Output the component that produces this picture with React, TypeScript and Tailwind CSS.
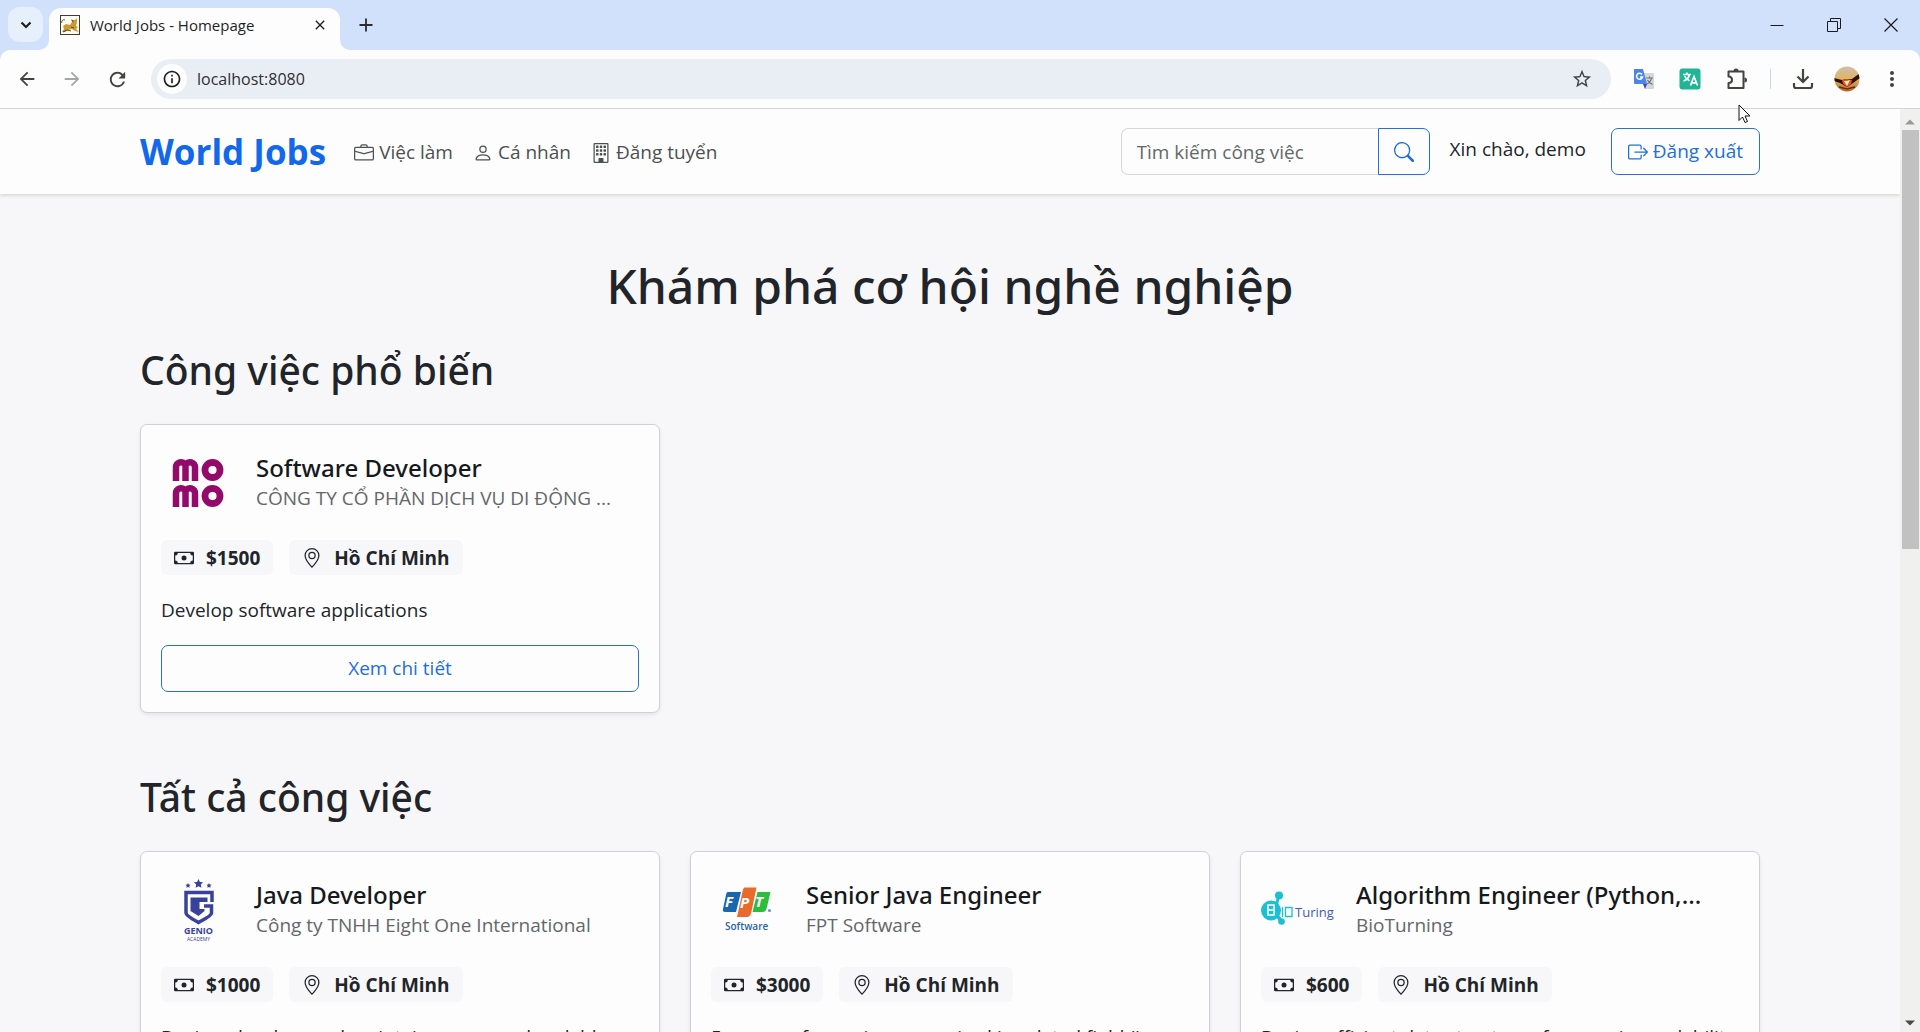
import type { ReactNode } from "react";
import { BsBoxArrowRight, BsBriefcase, BsBuilding, BsCash, BsGeoAlt, BsPerson, BsSearch } from "react-icons/bs";
import { MdArrowBack, MdArrowForward, MdClose, MdInfoOutline, MdMoreVert, MdRefresh, MdStarBorder } from "react-icons/md";

function TomcatIcon() {
  return (
    <svg viewBox="0 0 20 20" className="size-5 shrink-0" aria-hidden="true">
      <rect x="0.5" y="0.5" width="19" height="19" fill="#fdfdf8" stroke="#3f3f2c" />
      <path d="M2 17l2-3-1-3 3-2 4 1 2-3-1-3 2 1 2 0 2-2 0 4-1 4 2 1-2 2 3 3-4-1-3-2-4 1-3 2z" fill="#c99a35" />
      <path d="M2 8c-1-2 1-4 3-3M3 17l4-2 4 1M12 5l1 2M11 12l3 1" fill="none" stroke="#5b4a20" strokeWidth="1" />
    </svg>
  );
}

function PuzzleIcon() {
  return (
    <svg viewBox="0 0 24 24" className="size-6" fill="none" stroke="#41443f" strokeWidth="2" strokeLinejoin="round" aria-hidden="true">
      <path d="M3.500 4.500h15V21h-15v-5c2.200 0 3.500-1.200 3.500-3S5.700 9.500 3.500 9.500z" />
      <path d="M8.500 4a2.500 2.500 0 0 1 5 0z" fill="#41443f" stroke="none" />
      <path d="M19.500 10.500a2.500 2.500 0 0 1 0 5z" fill="#41443f" stroke="none" />
    </svg>
  );
}

function GoogleTranslateIcon() {
  return (
    <svg viewBox="0 0 22 22" className="size-[22px]" aria-hidden="true">
      <path d="M8 5h12a1 1 0 0 1 1 1v14a1 1 0 0 1-1 1h-8z" fill="#d3d6da" />
      <path d="M1 1h9l4 15H2a1 1 0 0 1-1-1z" fill="#4a86e8" />
      <path d="M10 16h4l-2 5z" fill="#3949ab" />
      <path d="M9 6.500A3 3 0 1 0 9.500 9H7" fill="none" stroke="#fff" strokeWidth="1.500" />
      <path d="M13 10h7M16.500 8.500V10M18.500 10c-.5 3-2.500 5-4.500 6M14.500 12c1 2 3 3.500 5 4.500" fill="none" stroke="#6d7278" strokeWidth="1.200" />
    </svg>
  );
}

function GreenTranslateIcon() {
  return (
    <svg viewBox="0 0 22 22" className="size-[22px]" aria-hidden="true">
      <rect x="0.500" y="0.500" width="21" height="21" rx="3" fill="#1fb595" />
      <path d="M4 6.500h8M8 4.500v2M10.500 6.500c-.6 3-3 5.500-6 6.500M5.500 8c1.200 2.500 3 4 5 4.800M11.500 17.500l3.500-9 3.500 9M12.800 14.800h4.500" fill="none" stroke="#fff" strokeWidth="1.700" />
    </svg>
  );
}

function DownloadIcon() {
  return (
    <svg viewBox="0 0 22 22" className="size-[22px]" fill="none" stroke="#41443f" strokeWidth="2.200" aria-hidden="true">
      <path d="M11 1v12M5.500 8.500L11 14l5.500-5.500M2 15v3a2 2 0 0 0 2 2h14a2 2 0 0 0 2-2v-3" />
    </svg>
  );
}

function Avatar() {
  return (
    <svg viewBox="0 0 26 26" className="size-[26px]" aria-hidden="true">
      <defs>
        <clipPath id="avatar-clip"><circle cx="13" cy="13" r="12.500" /></clipPath>
        <linearGradient id="avatar-sky" x1="0" y1="0" x2="0" y2="1">
          <stop offset="0" stopColor="#cdbfae" />
          <stop offset="0.500" stopColor="#e3b45f" />
          <stop offset="1" stopColor="#b4642c" />
        </linearGradient>
      </defs>
      <g clipPath="url(#avatar-clip)">
        <rect width="26" height="26" fill="url(#avatar-sky)" />
        <path d="M0 12l8 2 5-1 5 0 8-6v5l-7 5-6 4-7-4-6-2z" fill="#2c110b" />
        <path d="M8 14l5-1 5 1-1 4-4 3-4-3z" fill="#e0511f" />
        <path d="M10 15l3 0 3-1-3 6z" fill="#fff1c0" />
        <path d="M5 21l8 2 8-2" fill="none" stroke="#6b2a14" strokeWidth="1.500" />
      </g>
    </svg>
  );
}

function MomoLogo() {
  return (
    <svg viewBox="0 0 75 75" className="size-[75px]" fill="none" stroke="#930a6a" aria-hidden="true">
      {[14, 40].map((y) => (
        <g key={y}>
          <path d={`M15 ${y + 22}v-13.500a5 5 0 0 1 9.500-2.500a5 5 0 0 1 9.500 2.500v13.500M24.500 ${y + 22}v-16`} strokeWidth="6.500" />
          <circle cx="51.500" cy={y + 11} r="7.500" strokeWidth="6.800" />
        </g>
      ))}
    </svg>
  );
}

function GenioLogo() {
  return (
    <svg viewBox="0 0 75 75" className="size-[75px]" fill="#38429b" fontFamily="'Open Sans', sans-serif" textAnchor="middle" aria-hidden="true">
      <path d="M37.500 7l1.400 2.900 3.200.4-2.300 2.200.6 3.200-2.900-1.500-2.900 1.500.6-3.200-2.300-2.200 3.200-.4zM27 11l.8 1.600 1.700.2-1.200 1.200.3 1.700-1.600-.8-1.600.8.3-1.700-1.200-1.200 1.700-.2zM48 11l.8 1.600 1.700.2-1.200 1.200.3 1.700-1.600-.8-1.600.8.3-1.700-1.200-1.200 1.700-.2z" />
      <path d="M51 30V20.500H25V41c0 3 9 7.500 12.500 9.500C41 48.500 50.500 44 50.500 41v-7H43" fill="none" stroke="#38429b" strokeWidth="3.500" />
      <path d="M29.500 25.500h17V30h-8v7h5v2l-6 5-8-5z" />
      <text x="37.500" y="62" fontSize="9" fontWeight="700">GENIO</text>
      <text x="37.500" y="69" fontSize="5">ACADEMY</text>
    </svg>
  );
}

function FptLogo() {
  return (
    <svg viewBox="0 0 75 75" className="size-[75px]" fontFamily="'Open Sans', sans-serif" aria-hidden="true">
      <path d="M17 20h13l-5 20H14.500c-2.500 0-3-1-2.500-3l3-14c.4-2 .8-3 2-3z" fill="#1768ae" />
      <path d="M34 15.500h11.500l-5 24c-1 4-2 5.500-5 5.500H26l5-23c1-5 1.500-6.500 3-6.500z" fill="#ea6a2c" />
      <path d="M46.500 20H59.500l-3.500 15c-1 4-2 5-5 5H41.500z" fill="#2bbd3e" />
      <g fontSize="15" fontWeight="700" fontStyle="italic" fill="#fff">
        <text x="14" y="35">F</text>
        <text x="29" y="36">P</text>
        <text x="44" y="35">T</text>
      </g>
      <circle cx="58.500" cy="38.500" r="1.500" fill="#5f8fc4" />
      <text x="14" y="58" fontSize="10" fontWeight="600" fill="#2a659f">Software</text>
    </svg>
  );
}

function BioTuringLogo() {
  return (
    <svg viewBox="0 0 75 75" className="size-[75px]" aria-hidden="true">
      <g fill="#1dbfd3">
        <circle cx="10" cy="38.500" r="10" />
        <circle cx="18" cy="23.500" r="4" />
        <circle cx="20.500" cy="49.500" r="3.300" />
        <path d="M14 31l3-8 2 1-2 9zM14 44l5 6 2-3-4-5z" />
      </g>
      <path d="M7 33h6v10H7zM7 38h7" fill="none" stroke="#fff" strokeWidth="1.500" />
      <path d="M21.500 35v10M24.500 35.500h6.500v9h-6.500z" fill="none" stroke="#1dbfd3" strokeWidth="1.300" />
      <text x="34" y="45" fontSize="13" fontFamily="'Open Sans', sans-serif" fill="#3d5bb8">Turing</text>
    </svg>
  );
}

type Job = { title: string; company: string; salary: string; place: string; text: string; logo: ReactNode };

const popular: Job[] = [
  { title: "Software Developer", company: "CÔNG TY CỔ PHẦN DỊCH VỤ DI ĐỘNG ...", salary: "$1500", place: "Hồ Chí Minh", text: "Develop software applications", logo: <MomoLogo /> },
];

const all: Job[] = [
  { title: "Java Developer", company: "Công ty TNHH Eight One International", salary: "$1000", place: "Hồ Chí Minh", text: "Design, develop, and maintain secure and scalable", logo: <GenioLogo /> },
  { title: "Senior Java Engineer", company: "FPT Software", salary: "$3000", place: "Hồ Chí Minh", text: "5+ years of experience required in related field (in", logo: <FptLogo /> },
  { title: "Algorithm Engineer (Python,...", company: "BioTurning", salary: "$600", place: "Hồ Chí Minh", text: "Design efficient data structures for massive scalability", logo: <BioTuringLogo /> },
];

function Badge({ icon, children }: { icon: ReactNode; children: ReactNode }) {
  return (
    <span className="flex h-[35px] items-center gap-3 rounded-md bg-[#f7f7fa] px-[13px] leading-5 font-bold">
      {icon}
      {children}
    </span>
  );
}

function JobCard({ job }: { job: Job }) {
  return (
    <article className="rounded-[7px] border border-[#d0d0d6] bg-[#fdfdfd] p-5 shadow-[0_2px_4px_rgba(0,0,0,0.08)]">
      <div className="flex items-center gap-5">
        {job.logo}
        <div className="min-w-0 flex-1">
          <h3 className="font-['Noto_Sans',sans-serif] text-2xl leading-[30px] font-medium text-[#16191c]">{job.title}</h3>
          <p className="leading-[30px] text-[#64676a]">{job.company}</p>
        </div>
      </div>
      <div className="mt-5 flex gap-4">
        <Badge icon={<BsCash className="size-5" />}>{job.salary}</Badge>
        <Badge icon={<BsGeoAlt className="size-5" />}>{job.place}</Badge>
      </div>
      <p className="mt-5 leading-[30px]">{job.text}</p>
      <button className="mt-5 h-[47px] w-full rounded-[7px] border border-[#2b6fd0] text-[#1f6fd8]">Xem chi tiết</button>
    </article>
  );
}

function BrowserChrome() {
  return (
    <div className="shrink-0 bg-[#d1e1fb]">
      <div className="flex h-[50px] items-end pl-2">
        <button aria-label="Search tabs" className="mb-2 flex size-[35px] items-center justify-center rounded-xl bg-[#e6effc]">
          <svg viewBox="0 0 12 12" className="size-3" fill="none" stroke="#1f1f1f" strokeWidth="2.200" aria-hidden="true">
            <path d="M1.500 3.500L6 8l4.500-4.500" />
          </svg>
        </button>
        <svg viewBox="0 0 10 10" className="-ml-1 size-2.5" fill="#fdfdfd" aria-hidden="true"><path d="M10 0v10H0A10 10 0 0 0 10 0z" /></svg>
        <div className="flex h-[42px] w-[291px] items-center rounded-t-xl bg-[#fdfdfd] pr-3 pb-2 pl-[11px]">
          <TomcatIcon />
          <span className="ml-2.5 flex-1 text-[15px] text-[#1f1f1f]">World Jobs - Homepage</span>
          <button aria-label="Close tab"><MdClose className="size-4 text-[#1f1f1f]" /></button>
        </div>
        <svg viewBox="0 0 10 10" className="size-2.5" fill="#fdfdfd" aria-hidden="true"><path d="M0 0v10h10A10 10 0 0 1 0 0z" /></svg>
        <button aria-label="New tab" className="mb-[18px] ml-[9px]">
          <svg viewBox="0 0 14 14" className="size-3.5" stroke="#2b2b2b" strokeWidth="1.800" aria-hidden="true"><path d="M7 0.500v13M0.500 7h13" /></svg>
        </button>
        <div className="mb-[18px] ml-auto flex gap-[43px] pr-[22px] text-[#1b1b1b]">
          <button aria-label="Minimize"><svg viewBox="0 0 14 14" className="size-3.5" stroke="currentColor" aria-hidden="true"><path d="M0.500 7.500h13" /></svg></button>
          <button aria-label="Restore"><svg viewBox="0 0 14 14" className="size-3.5" fill="none" stroke="currentColor" aria-hidden="true"><path d="M.5 3.500h10v10h-10zM3.500 3.500v-3h10v10h-3" /></svg></button>
          <button aria-label="Close"><svg viewBox="0 0 14 14" className="size-3.5" stroke="currentColor" strokeWidth="1.200" aria-hidden="true"><path d="M0.500 0.500l13 13M13.500 0.500l-13 13" /></svg></button>
        </div>
      </div>
      <div className="relative flex h-[59px] items-center rounded-t-[10px] border-b border-[#d3d3d3] bg-[#fdfdfd] pr-4 pl-4 text-[#41443f]">
        <button aria-label="Back"><MdArrowBack className="size-[22px]" /></button>
        <button aria-label="Forward" className="ml-[23px]"><MdArrowForward className="size-[22px] text-[#a5a6aa]" /></button>
        <button aria-label="Reload" className="ml-[23px]"><MdRefresh className="size-[23px]" /></button>
        <div className="ml-[22px] flex h-10 flex-1 items-center rounded-full bg-[#e9eef4] pr-[18px] pl-1.5">
          <span className="flex size-[30px] items-center justify-center rounded-full bg-[#fdfdfd]"><MdInfoOutline className="size-5 text-[#1f1f1f]" /></span>
          <input aria-label="Address" defaultValue="localhost:8080" className="ml-2.5 flex-1 bg-transparent text-base text-[#2e2f33] outline-none" />
          <button aria-label="Bookmark"><MdStarBorder className="size-[22px]" /></button>
        </div>
        <div className="ml-[22px] flex items-center gap-6">
          <button aria-label="Google Translate"><GoogleTranslateIcon /></button>
          <button aria-label="Translator"><GreenTranslateIcon /></button>
          <button aria-label="Extensions"><PuzzleIcon /></button>
        </div>
        <span className="mx-[21px] h-5 w-px bg-[#c9daf6]" />
        <div className="flex items-center gap-5">
          <button aria-label="Downloads"><DownloadIcon /></button>
          <button aria-label="Profile"><Avatar /></button>
          <button aria-label="Menu"><MdMoreVert className="size-6" /></button>
        </div>
        <svg viewBox="0 0 13 20" className="absolute right-[169px] -bottom-4 z-10 h-5 w-[13px]" aria-hidden="true">
          <path d="M1 1v15.500l3.500-3.500 2.500 5.500 2.500-1-2.500-5.500h5z" fill="#fff" stroke="#111" />
        </svg>
      </div>
    </div>
  );
}

function Navbar() {
  return (
    <header className="bg-[#fdfdfd] shadow-[0_2px_3px_rgba(60,60,0,0.14)]">
      <div className="mx-auto flex h-[85px] max-w-[1650px] items-center px-[15px]">
        <a href="#home" className="text-[35px] leading-[50px] font-bold text-[#1268ea]">World Jobs</a>
        <nav className="ml-7 flex gap-5 pt-0.5 text-[#4d5050]">
          <a href="#jobs" className="flex items-center gap-[5px]"><BsBriefcase className="size-5" />Việc làm</a>
          <a href="#profile" className="flex items-center gap-[5px]"><BsPerson className="size-5" />Cá nhân</a>
          <a href="#post" className="flex items-center gap-[5px]"><BsBuilding className="size-5" />Đăng tuyển</a>
        </nav>
        <form className="ml-auto flex">
          <input aria-label="Tìm kiếm công việc" placeholder="Tìm kiếm công việc" className="h-[47px] w-[257px] rounded-l-[7px] border border-r-0 border-[#d5d8db] bg-transparent px-[15px] outline-none placeholder:text-[#64676a]" />
          <button type="button" aria-label="Tìm kiếm" className="flex h-[47px] w-[52px] items-center justify-center rounded-r-[7px] border border-[#2070e0] text-[#1a6ae0]"><BsSearch className="size-5" /></button>
        </form>
        <span className="mr-[25px] mb-1 ml-5">Xin chào, demo</span>
        <button className="flex h-[47px] items-center gap-[5px] rounded-[7px] border border-[#2b6fd0] px-4 text-[#1f6fd8]"><BsBoxArrowRight className="size-5" />Đăng xuất</button>
      </div>
    </header>
  );
}

export default function App() {
  return (
    <div className="flex h-screen flex-col overflow-hidden font-['Open_Sans','Noto_Sans',sans-serif] text-[19px] text-[#212529]">
      <BrowserChrome />
      <div className="flex min-h-0 flex-1">
        <div className="flex-1 overflow-hidden bg-[#f7f7f9]">
          <Navbar />
          <main className="mx-auto max-w-[1650px] px-[15px] pt-[62px] pb-20">
            <h1 className="text-center font-['Noto_Sans',sans-serif] text-[48px] leading-[60px] font-medium">Khám phá cơ hội nghề nghiệp</h1>
            <h2 className="mt-[30px] font-['Noto_Sans',sans-serif] text-[39px] leading-[48px] font-medium">Công việc phổ biến</h2>
            <div className="mt-[30px] grid grid-cols-3 gap-[30px]">{popular.map((j) => <JobCard key={j.title} job={j} />)}</div>
            <h2 className="mt-[60px] font-['Noto_Sans',sans-serif] text-[39px] leading-[48px] font-medium">Tất cả công việc</h2>
            <div className="mt-[30px] grid grid-cols-3 gap-[30px]">{all.map((j) => <JobCard key={j.title} job={j} />)}</div>
          </main>
        </div>
        <div className="flex w-5 flex-col items-center justify-between bg-[#f0f0ee] py-1.5" aria-hidden="true">
          <svg viewBox="0 0 10 6" className="mt-1 mb-[5px] h-1.5 w-2.5 shrink-0" fill="#9a9a9a"><path d="M0 5.500L5 .5l5 5z" /></svg>
          <div className="mb-auto h-[46%] w-[17px] bg-[#c1c1c1]" />
          <svg viewBox="0 0 10 6" className="h-1.5 w-2.5 shrink-0" fill="#4a4a48"><path d="M0 .5l5 5 5-5z" /></svg>
        </div>
      </div>
    </div>
  );
}
